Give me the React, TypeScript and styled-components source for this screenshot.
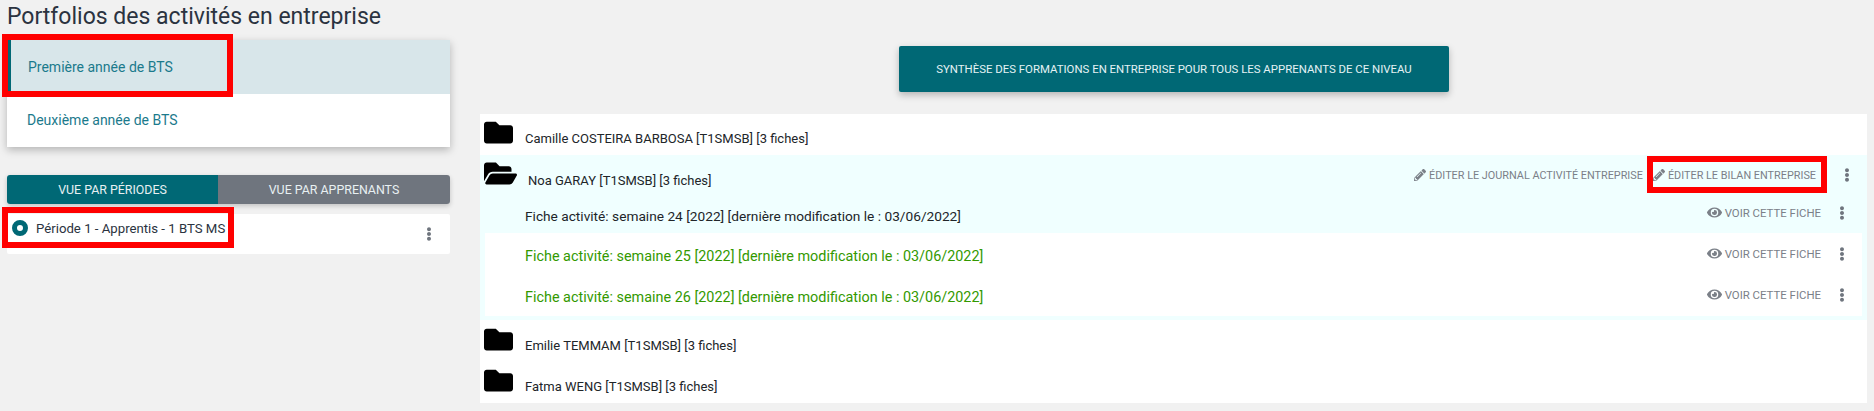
import { FaEllipsisV, FaEye, FaFolder, FaFolderOpen, FaPencilAlt } from 'react-icons/fa'
import styled, { createGlobalStyle } from 'styled-components'

const Global = createGlobalStyle`
    html, body {
        margin: 0;
        background: #f1f1f1;
        font-family: 'Roboto', 'Liberation Sans', sans-serif;
        color: #212529;
    }
    * { box-sizing: border-box; }
`

const Page = styled.div`
    height: 411px;
    overflow: hidden;
    padding: 0 7px;
    display: grid;
    grid-template-columns: 443px 1387px;
    column-gap: 30px;
`

const LeftColumn = styled.div`
    display: flex;
    flex-direction: column;
`

const Title = styled.h1`
    margin: 0;
    height: 40px;
    padding-top: 3px;
    font-size: 23px;
    line-height: 28px;
    font-weight: 400;
    color: #2b3340;
`

const LevelCard = styled.div`
    background: #fff;
    box-shadow: 0 3px 8px rgba(0, 0, 0, 0.25);
    margin-bottom: 28px;
`

const LevelItem = styled.div<{ $active?: boolean }>`
    height: 53.5px;
    display: flex;
    align-items: center;
    padding-left: ${(p) => (p.$active ? '17px' : '20px')};
    font-size: 14px;
    color: #1b7a8c;
    background: ${(p) => (p.$active ? '#d8e6ea' : '#fff')};
    border-left: ${(p) => (p.$active ? '4px solid #006875' : 'none')};
`

const Tabs = styled.div`
    height: 29px;
    display: grid;
    grid-template-columns: 211px 232px;
    border-radius: 3px;
    overflow: hidden;
    box-shadow: 0 2px 5px rgba(0, 0, 0, 0.2);
    margin-bottom: 10px;
`

const Tab = styled.div<{ $active?: boolean }>`
    display: flex;
    align-items: center;
    justify-content: center;
    font-size: 12.4px;
    color: #e8f0f2;
    background: ${(p) => (p.$active ? '#006875' : '#6f757e')};
`

const PeriodRow = styled.div`
    height: 40px;
    background: #fff;
    border-radius: 2px;
    display: flex;
    align-items: flex-start;
    padding: 6px 14px 0 5px;
    font-size: 13.2px;
    line-height: 18px;
    color: #2b3340;
`

const Radio = styled.span`
    width: 16px;
    height: 16px;
    border-radius: 50%;
    border: 5px solid #006875;
    background: #fff;
    margin-right: 8px;
    flex: none;
`

const PeriodMenu = styled.span`
    margin-left: auto;
    padding-top: 7px;
`

const Menu = styled(FaEllipsisV)`
    color: #6f757e;
    font-size: 14px;
    display: block;
    flex: none;
`

const RightColumn = styled.div`
    display: flex;
    flex-direction: column;
    padding-top: 46px;
`

const SummaryButton = styled.div`
    width: 550px;
    height: 46px;
    margin: 0 0 22px 419px;
    display: flex;
    align-items: center;
    justify-content: center;
    background: #006875;
    color: #e4f2f4;
    font-size: 11.4px;
    white-space: nowrap;
    border-radius: 2px;
    box-shadow: 0 3px 7px rgba(0, 0, 0, 0.25);
`

const Panel = styled.div`
    width: 100%;
    height: 289px;
    background: #fff;
`

const LearnerRow = styled.div`
    height: 41px;
    display: flex;
    align-items: flex-start;
    padding-left: 4px;
    font-size: 13px;
    color: #212529;
`

const FolderIcon = styled(FaFolder)`
    font-size: 29px;
    color: #000;
    margin: 4px 12px 0 0;
    flex: none;
`

const LearnerName = styled.span`
    margin-top: 17px;
    line-height: 16px;
`

const OpenGroup = styled.div`
    height: 165px;
    margin-bottom: 1px;
    background: #f0ffff;
`

const OpenHeader = styled.div`
    height: 37px;
    display: flex;
    align-items: flex-start;
    padding: 2px 13px 0 4px;
    font-size: 13px;
`

const OpenFolder = styled(FaFolderOpen)`
    font-size: 33px;
    color: #000;
    margin-right: 11px;
    flex: none;
`

const OpenName = styled.span`
    margin-top: 16px;
    line-height: 16px;
`

const Actions = styled.div`
    margin-left: auto;
    display: flex;
    align-items: center;
    gap: 10px;
    padding-top: 11px;
`

const ActionLink = styled.span`
    display: inline-flex;
    align-items: center;
    gap: 3px;
    font-size: 10.85px;
    color: #7b8088;
    white-space: nowrap;
`

const VoirLink = styled(ActionLink)`
    font-size: 11.4px;
`

const HeaderMenu = styled(Menu)`
    margin-left: 14px;
`

const SheetList = styled.div<{ $saved?: boolean }>`
    height: ${(p) => (p.$saved ? '83px' : '41px')};
    margin: 0 5px;
    background: ${(p) => (p.$saved ? '#fff' : 'transparent')};
`

const SheetRow = styled.div`
    height: 41px;
    display: flex;
    align-items: center;
    padding: 0 13px 0 40px;
`

const SheetText = styled.span<{ $green?: boolean }>`
    padding-top: 6px;
    font-size: ${(p) => (p.$green ? '14.4px' : '13.7px')};
    color: ${(p) => (p.$green ? '#339900' : '#212529')};
`

const SheetAction = styled.div`
    margin-left: auto;
    display: flex;
    align-items: center;
    gap: 14px;
`

const RedBox = styled.div<{ $x: number; $y: number; $w: number; $h: number }>`
    position: absolute;
    left: ${(p) => p.$x}px;
    top: ${(p) => p.$y}px;
    width: ${(p) => p.$w}px;
    height: ${(p) => p.$h}px;
    border: 6px solid #ff0000;
`

const learners = [
    'Camille COSTEIRA BARBOSA [T1SMSB] [3 fiches]',
    'Emilie TEMMAM [T1SMSB] [3 fiches]',
    'Fatma WENG [T1SMSB] [3 fiches]',
]

const Learner = ({ name }: { name: string }) => (
    <LearnerRow>
        <FolderIcon />
        <LearnerName>{name}</LearnerName>
    </LearnerRow>
)

const Sheet = ({ week, green }: { week: number; green?: boolean }) => (
    <SheetRow>
        <SheetText $green={green}>
            Fiche activité: semaine {week} [2022] [dernière modification le : 03/06/2022]
        </SheetText>
        <SheetAction>
            <VoirLink>
                <FaEye size={15} />
                VOIR CETTE FICHE
            </VoirLink>
            <Menu />
        </SheetAction>
    </SheetRow>
)

const App = () => {
    return (
        <>
            <Global />
            <Page>
                <LeftColumn>
                    <Title>Portfolios des activités en entreprise</Title>
                    <LevelCard>
                        <LevelItem $active>Première année de BTS</LevelItem>
                        <LevelItem>Deuxième année de BTS</LevelItem>
                    </LevelCard>
                    <Tabs>
                        <Tab $active>VUE PAR PÉRIODES</Tab>
                        <Tab>VUE PAR APPRENANTS</Tab>
                    </Tabs>
                    <PeriodRow>
                        <Radio />
                        Période 1 - Apprentis - 1 BTS MS
                        <PeriodMenu>
                            <Menu />
                        </PeriodMenu>
                    </PeriodRow>
                </LeftColumn>
                <RightColumn>
                    <SummaryButton>
                        SYNTHÈSE DES FORMATIONS EN ENTREPRISE POUR TOUS LES APPRENANTS DE CE NIVEAU
                    </SummaryButton>
                    <Panel>
                        <Learner name={learners[0]} />
                        <OpenGroup>
                            <OpenHeader>
                                <OpenFolder />
                                <OpenName>Noa GARAY [T1SMSB] [3 fiches]</OpenName>
                                <Actions>
                                    <ActionLink>
                                        <FaPencilAlt size={12} />
                                        ÉDITER LE JOURNAL ACTIVITÉ ENTREPRISE
                                    </ActionLink>
                                    <ActionLink>
                                        <FaPencilAlt size={12} />
                                        ÉDITER LE BILAN ENTREPRISE
                                    </ActionLink>
                                    <HeaderMenu />
                                </Actions>
                            </OpenHeader>
                            <SheetList>
                                <Sheet week={24} />
                            </SheetList>
                            <SheetList $saved>
                                <Sheet
                                    week={25}
                                    green
                                />
                                <Sheet
                                    week={26}
                                    green
                                />
                            </SheetList>
                        </OpenGroup>
                        <Learner name={learners[1]} />
                        <Learner name={learners[2]} />
                    </Panel>
                </RightColumn>
            </Page>
            <RedBox $x={2} $y={34} $w={231} $h={63} />
            <RedBox $x={2} $y={207} $w={232} $h={41} />
            <RedBox $x={1647} $y={156} $w={180} $h={37} />
        </>
    )
}

export default App
